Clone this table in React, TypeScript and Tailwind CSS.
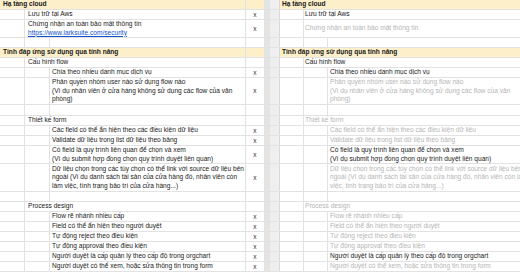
import React from "react";

type Kind = "header" | "empty" | "l2" | "l3";

interface Row {
  kind: Kind;
  h: string;
  left?: React.ReactNode;
  right?: React.ReactNode;
  dim?: boolean;
  x?: boolean;
}

const LINK = (
  <span className="text-[#1155cc] underline">https://www.larksuite.com/security</span>
);

const ROWS: Row[] = [
  { kind: "header", h: "h-[10px]", left: "Hạ tầng cloud", right: "Hạ tầng cloud" },
  { kind: "l2", h: "h-[10px]", left: "Lưu trữ tại Aws", right: "Lưu trữ tại Aws", x: true },
  {
    kind: "l2",
    h: "h-[18px]",
    left: <>Chứng nhận an toàn bảo mật thông tin<br />{LINK}</>,
    right: "Chứng nhận an toàn bảo mật thông tin",
    dim: true,
    x: true,
  },
  { kind: "empty", h: "h-[10px]" },
  { kind: "header", h: "h-[10px]", left: "Tính đáp ứng sử dụng qua tính năng", right: "Tính đáp ứng sử dụng qua tính năng" },
  { kind: "l2", h: "h-[10px]", left: "Cấu hình flow", right: "Cấu hình flow" },
  { kind: "l3", h: "h-[10px]", left: "Chia theo nhiều danh mục dịch vụ", right: "Chia theo nhiều danh mục dịch vụ", x: true },
  {
    kind: "l3",
    h: "h-[27px]",
    left: <>Phân quyền nhóm user nào sử dụng flow nào<br />(Ví dụ nhân viên ở cửa hàng không sử dụng các flow của văn<br />phòng)</>,
    right: <>Phân quyền nhóm user nào sử dụng flow nào<br />(Ví dụ nhân viên ở cửa hàng không sử dụng các flow của văn<br />phòng)</>,
    dim: true,
    x: true,
  },
  { kind: "empty", h: "h-[11px]" },
  { kind: "l2", h: "h-[10px]", left: "Thiết kế form", right: "Thiết kế form", dim: true },
  { kind: "l3", h: "h-[10px]", left: "Các field có thể ẩn hiện theo các điều kiện dữ liệu", right: "Các field có thể ẩn hiện theo các điều kiện dữ liệu", dim: true, x: true },
  { kind: "l3", h: "h-[10px]", left: "Validate dữ liệu trong list dữ liệu theo bảng", right: "Validate dữ liệu trong list dữ liệu theo bảng", dim: true, x: true },
  {
    kind: "l3",
    h: "h-[18px]",
    left: <>Có field là quy trình liên quan để chọn và xem<br />(Ví dụ submit hợp đồng chọn quy trình duyệt liên quan)</>,
    right: <>Có field là quy trình liên quan để chọn và xem<br />(Ví dụ submit hợp đồng chọn quy trình duyệt liên quan)</>,
    x: true,
  },
  {
    kind: "l3",
    h: "h-[28px]",
    left: <>Dữ liệu chọn trong các tùy chọn có thể link với source dữ liệu bên<br />ngoài (Ví dụ danh sách tài sản của cửa hàng đó, nhân viên còn<br />làm việc, tình trạng bảo trì của cửa hàng...)</>,
    right: <>Dữ liệu chọn trong các tùy chọn có thể link với source dữ liệu bên<br />ngoài (Ví dụ danh sách tài sản của cửa hàng đó, nhân viên còn làm<br />việc, tình trạng bảo trì của cửa hàng...)</>,
    dim: true,
    x: true,
  },
  { kind: "empty", h: "h-[10px]" },
  { kind: "l2", h: "h-[10px]", left: "Process design", right: "Process design", dim: true },
  { kind: "l3", h: "h-[10px]", left: "Flow rẽ nhánh nhiều cấp", right: "Flow rẽ nhánh nhiều cấp", dim: true, x: true },
  { kind: "l3", h: "h-[10px]", left: "Field có thể ẩn hiện theo người duyệt", right: "Field có thể ẩn hiện theo người duyệt", dim: true, x: true },
  { kind: "l3", h: "h-[10px]", left: "Tự động reject theo điều kiện", right: "Tự động reject theo điều kiện", dim: true, x: true },
  { kind: "l3", h: "h-[10px]", left: "Tự động approval theo điều kiện", right: "Tự động approval theo điều kiện", dim: true, x: true },
  { kind: "l3", h: "h-[10px]", left: "Người duyệt là cấp quản lý theo cấp độ trong orgchart", right: "Người duyệt là cấp quản lý theo cấp độ trong orgchart", x: true },
  { kind: "l3", h: "h-[10px]", left: "Người duyệt có thể xem, hoặc sửa thông tin trong form", right: "Người duyệt có thể xem, hoặc sửa thông tin trong form", dim: true, x: true },
];

const CELL = "border-r border-[#e2e2e2] overflow-hidden";
const TEXT = "flex items-center whitespace-nowrap leading-[8.5px]";

function Gutter() {
  return (
    <div className="flex border-r border-[#d9d9d9]">
      <div className="w-[5px] bg-[#e4e4e4]" />
      <div className="flex-1 bg-[#efefef]" />
    </div>
  );
}

function SheetRow({ row }: { row: Row }) {
  const dimText = row.dim ? "text-[#b5b5b5]" : "text-[#222]";

  if (row.kind === "header") {
    return (
      <div className={`grid grid-cols-[25px_25px_196px_19px_15px_24px_24px_1fr] ${row.h} border-b border-[#e2e2e2]`}>
        <div className={`col-span-3 ${CELL} ${TEXT} bg-[#fcefc9] pl-[3px] font-bold text-[#1a1a1a]`}>
          <div>{row.left}</div>
        </div>
        <div className={`${CELL} bg-[#fcefc9]`} />
        <Gutter />
        <div className={`col-span-3 ${TEXT} bg-[#fcefc9] pl-[2px] font-bold text-[#1a1a1a]`}>
          <div>{row.right}</div>
        </div>
      </div>
    );
  }

  return (
    <div className={`grid grid-cols-[25px_25px_196px_19px_15px_24px_24px_1fr] ${row.h} border-b border-[#e2e2e2] bg-white`}>
      {/* left panel */}
      <div className={CELL} />
      {row.kind === "l2" ? (
        <div className={`col-span-2 ${CELL} ${TEXT} pl-[3px] text-[#222]`}>
          <div>{row.left}</div>
        </div>
      ) : (
        <>
          <div className={CELL} />
          <div className={`${CELL} ${TEXT} pl-[2px] text-[#222]`}>
            <div>{row.left}</div>
          </div>
        </>
      )}
      <div className={`${CELL} flex items-center justify-center text-[#333]`}>{row.x ? "x" : ""}</div>

      <Gutter />

      {/* right panel */}
      <div className={CELL} />
      {row.kind === "l2" ? (
        <div className={`col-span-2 ${TEXT} pl-[1px] ${dimText}`}>
          <div>{row.right}</div>
        </div>
      ) : (
        <>
          <div className={CELL} />
          <div className={`${TEXT} pl-[2px] overflow-hidden ${dimText}`}>
            <div>{row.right}</div>
          </div>
        </>
      )}
    </div>
  );
}

export default function App() {
  return (
    <div className="w-[520px] h-[272px] overflow-hidden bg-white font-['Liberation_Sans',Arial,sans-serif] text-[6.6px]">
      {ROWS.map((row, i) => (
        <SheetRow key={i} row={row} />
      ))}
    </div>
  );
}
